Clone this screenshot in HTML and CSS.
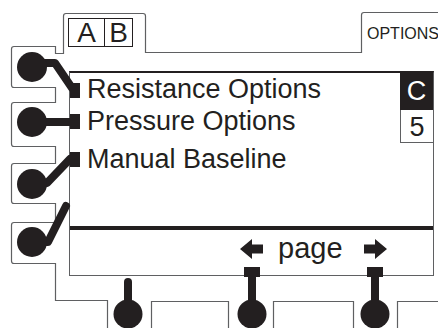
FILE: index.html
```html
<!DOCTYPE html>
<html lang="en">
<head>
    <meta charset="UTF-8">
    <meta name="viewport" content="width=device-width, initial-scale=1.0">
    <title>Options Menu</title>
    <link rel="stylesheet" href="styles.css">
</head>

<body>

    <div class="device">

        <!-- outline of the keypad, knobs and leader lines -->
        <svg class="wiring" width="438" height="328" viewBox="0 0 438 328">
            <g class="outline">
                <path d="M107.5 328 V300.5 H55.5 V263.5 H14 Q11.5 263.5 11.5 261 V225 Q11.5 222.5 14 222.5 H55.5 V203.5 H14 Q11.5 203.5 11.5 201 V166 Q11.5 163.5 14 163.5 H55.5 V146.5 H14 Q11.5 146.5 11.5 144 V105 Q11.5 102.5 14 102.5 H55.5 V87.5 H14 Q11.5 87.5 11.5 85 V49 Q11.5 46.5 14 46.5 H55.5 V53.5 H63.5 V16 Q63.5 13.5 66 13.5 H143 Q145.5 13.5 145.5 16 V52.5 H361.5 V15 Q361.5 12.5 364 12.5 H440"/>
                <path d="M151.5 328 V301.5 H228.5 V328"/>
                <path d="M273.5 328 V301.5 H353.5 V328"/>
                <path d="M397.5 328 V301.5 H440"/>
            </g>
            <g class="leads">
                <path d="M36 63 H55 L72 88"/>
                <path d="M32 122 H72"/>
                <path d="M36 184 L47 183 L70 159"/>
                <path d="M36 242 H48 L66 206"/>
                <path d="M128 282 V314"/>
                <path class="flat" d="M252 277 V314"/>
                <path class="flat" d="M375 277 V314"/>
            </g>
            <g class="knobs">
                <circle cx="32" cy="67" r="15"/>
                <circle cx="32" cy="122" r="15"/>
                <circle cx="32" cy="184" r="15"/>
                <circle cx="32" cy="242" r="15"/>
                <circle cx="128" cy="314" r="14.5"/>
                <circle cx="252" cy="314" r="14.5"/>
                <circle cx="375" cy="314" r="14.5"/>
                <rect x="70" y="83" width="10" height="15"/>
                <rect x="70" y="114" width="10" height="15"/>
                <rect x="70" y="152" width="10" height="15"/>
                <rect x="244" y="267" width="16" height="10"/>
                <rect x="367" y="267" width="16" height="10"/>
            </g>
        </svg>

        <div class="header">
            <div class="ab">
                <span class="cell-a">A</span>
                <span class="cell-b">B</span>
            </div>
            <div class="tab-label">OPTIONS</div>
        </div>

        <div class="screen">
            <div class="menu">
                <ul class="items">
                    <li>Resistance Options</li>
                    <li>Pressure Options</li>
                    <li class="spaced">Manual Baseline</li>
                </ul>
                <div class="side">
                    <div class="mode">C</div>
                    <div class="count">5</div>
                </div>
            </div>
            <div class="pager">
                <svg class="arrow" width="23" height="20" viewBox="0 0 23 20"><path d="M0 10 L12 0 V5.5 H23 V14.5 H12 V20 Z"/></svg>
                <span class="page-label">page</span>
                <svg class="arrow" width="23" height="20" viewBox="0 0 23 20"><path d="M23 10 L11 0 V5.5 H0 V14.5 H11 V20 Z"/></svg>
            </div>
        </div>

    </div>

</body>
</html>
```

FILE: styles.css
```css
/* Page */
body {
    margin: 0;
    background-color: white;
    font-family: "Liberation Sans", Arial, sans-serif;
    color: #231f20;
    overflow: hidden;
}

.device {
    position: relative;
    width: 438px;
    height: 328px;
    overflow: hidden;
}

/* Drawing that lies over the screen */
.wiring {
    position: absolute;
    top: 0;
    left: 0;
    pointer-events: none;
}

.outline path {
    fill: none;
    stroke: #5f6062;
    stroke-width: 1.2;
}

.leads path {
    fill: none;
    stroke: #231f20;
    stroke-width: 8;
    stroke-linecap: round;
    stroke-linejoin: round;
}

.leads .flat {
    stroke-linecap: butt;
}

.knobs {
    fill: #231f20;
}

/* Tabs above the screen */
.header {
    display: flex;
    align-items: flex-start;
    height: 71px;
    padding: 18px 0 0 68px;
    box-sizing: border-box;
}

.ab {
    display: flex;
    height: 29px;
    border: 1px solid #231f20;
    box-sizing: border-box;
    font-size: 28px;
    line-height: 27px;
}

.ab span {
    text-align: center;
}

.cell-a {
    width: 35px;
    border-right: 1px solid #231f20;
}

.cell-b {
    width: 27px;
}

.tab-label {
    flex-shrink: 0;
    margin: 7px 0 0 234px;
    font-size: 16px;
    line-height: 18px;
    white-space: nowrap;
}

/* Screen */
.screen {
    display: flex;
    flex-direction: column;
    width: 365px;
    height: 205px;
    margin-left: 69px;
    box-sizing: border-box;
    border: 1px solid #5f6062;
    border-top: 2px solid #231f20;
}

.menu {
    display: flex;
    height: 153px;
}

.items {
    flex: 1;
    list-style: none;
    margin: 0;
    padding: 0 0 0 17px;
    font-size: 27px;
    line-height: 32px;
    white-space: nowrap;
}

.items .spaced {
    margin-top: 6px;
}

.side {
    width: 33px;
    font-size: 27px;
    text-align: center;
}

.mode {
    height: 37px;
    line-height: 37px;
    background-color: #231f20;
    color: white;
}

.count {
    height: 33px;
    padding-top: 2px;
    line-height: 30px;
    box-sizing: border-box;
    border-left: 1px solid #5f6062;
    border-bottom: 1px solid #5f6062;
}

/* Paging bar */
.pager {
    flex: 1;
    display: flex;
    align-items: flex-start;
    padding: 3px 0 0 170px;
    border-top: 4px solid #231f20;
}

.arrow {
    margin-top: 6px;
    fill: #231f20;
}

.page-label {
    margin: 0 21px 0 15px;
    font-size: 29px;
    line-height: 30px;
}
```
